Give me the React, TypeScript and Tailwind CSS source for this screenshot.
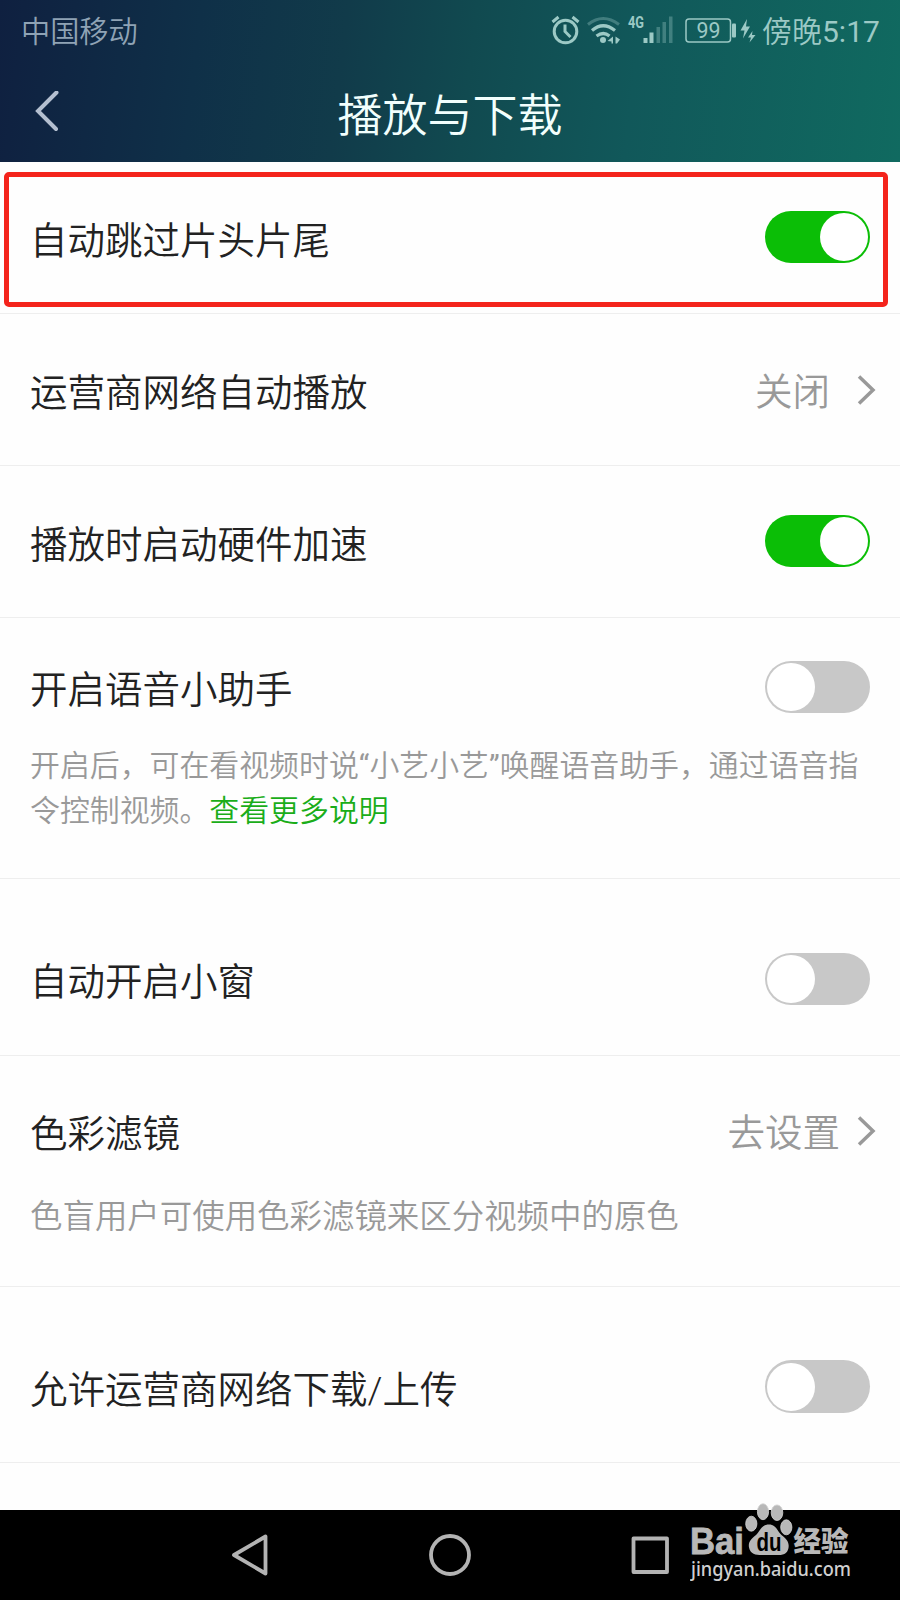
import type { ReactNode } from "react";

function Toggle({ on = false }: { on?: boolean }) {
  return (
    <div
      className={
        on
          ? "mb-px flex h-[52.500px] w-[105px] items-center justify-end rounded-full bg-[#0bbe06] pr-[2px]"
          : "flex h-[52.500px] w-[105px] items-center justify-start rounded-full bg-[#c8c8c8] pl-[2px]"
      }
    >
      <div className="size-[48px] rounded-full bg-white" />
    </div>
  );
}

function Chevron() {
  return (
    <svg className="h-[32px] w-[20px]" viewBox="0 0 20 32" fill="none" stroke="#999" strokeWidth="3.500">
      <path d="M3 2.500L17 16L3 29.500" />
    </svg>
  );
}

function Row({ className, label, children }: { className: string; label: string; children: ReactNode }) {
  return (
    <div className={"flex items-center justify-between pl-[30px] " + className}>
      <span className="pt-[6px] text-[37.5px] leading-[54px] text-[#222]">{label}</span>
      {children}
    </div>
  );
}

function StatusIcons() {
  return (
    <svg className="h-[62px] w-[212px] shrink-0" viewBox="0 0 212 62" fill="none" stroke="#9cc9c5">
      <circle cx="15.500" cy="31.500" r="11.300" strokeWidth="3" />
      <path d="M15 24.500v7l5.500 5.500M2.500 22l6-5M28.500 22l-6-5" strokeWidth="3" />
      <path d="M38 24.500q15-12 31 0" strokeWidth="3" opacity=".35" />
      <path d="M42 30.500q11-9.500 23 0M46.500 36q7-5 13 0" strokeWidth="3.200" />
      <circle cx="53" cy="40" r="3" fill="#9cc9c5" stroke="none" />
      <path d="M63 36.500v7h-1.500v-2l-4-.5zM65.500 36.500v7h1.500l3-4z" fill="#9cc9c5" stroke="none" />
      <text x="78" y="28" className="font-['Roboto'] text-[16px] font-bold" textLength="16" lengthAdjust="spacingAndGlyphs" fill="#9cc9c5" stroke="none">4G</text>
      <g fill="#9cc9c5" stroke="none">
        <rect x="93.500" y="38" width="4" height="5" />
        <rect x="99.500" y="32.500" width="4" height="10.500" />
        <rect x="106.500" y="27" width="3.500" height="16" opacity=".35" />
        <rect x="112.500" y="22" width="3.500" height="21" opacity=".35" />
        <rect x="119" y="16.500" width="3.500" height="26.500" opacity=".35" />
        <rect x="182" y="23.500" width="4" height="14" rx="1" />
        <path d="M197 19l-6.500 11.500h4l-1.500 8 7-12h-4zM202.500 31l-4.500 6.500h3l-1.500 5 6-7.500h-3.500z" />
      </g>
      <rect x="136" y="19" width="44.500" height="23" rx="3" strokeWidth="1.500" />
      <text x="146.500" y="38" className="font-['Roboto'] text-[22px] font-normal" textLength="24" lengthAdjust="spacingAndGlyphs" fill="#9cc9c5" stroke="none">99</text>
    </svg>
  );
}

function BaiduMark() {
  return (
    <div className="absolute left-[690px] top-[1502px] h-[80px] w-[165px]">
      <svg className="h-full w-full" viewBox="0 0 165 80" fill="#b8b8b8">
        <text x="0" y="51.500" className="font-['Liberation_Sans'] text-[37px] font-bold" textLength="54" lengthAdjust="spacingAndGlyphs" stroke="#b8b8b8" strokeWidth="0.800">Bai</text>
        <g stroke="#d4d4d4" strokeWidth="0.800">
          <ellipse cx="61.300" cy="21.700" rx="5.600" ry="7.500" />
          <ellipse cx="73" cy="9.700" rx="5.600" ry="8" />
          <ellipse cx="87" cy="10.700" rx="5.800" ry="7.800" />
          <ellipse cx="96.300" cy="25.300" rx="5.600" ry="7.500" />
        </g>
        <path d="M79 22.500c-8 0-9 7-13 10.500-5 4-8 7-7 12.500 2 9 10 7.500 20 7.500s18 1.500 19.500-7c1-6-2-9-7-13-4-3.500-5-10.500-12.500-10.500z" />
        <text x="66.500" y="48.500" className="font-['Liberation_Sans'] text-[26px] font-bold" textLength="25" lengthAdjust="spacingAndGlyphs" fill="#000">du</text>
        <text x="103.500" y="49.500" className="font-['Noto_Sans_CJK_SC'] text-[28px] font-black" textLength="55" lengthAdjust="spacingAndGlyphs">经验</text>
        <text x="1" y="73.500" className="font-['Noto_Sans'] text-[20px] font-medium" textLength="160" lengthAdjust="spacingAndGlyphs" fill="#d0d0d0">jingyan.baidu.com</text>
      </svg>
    </div>
  );
}

export default function App() {
  return (
    <div className="relative flex h-[1600px] w-[900px] flex-col overflow-hidden bg-[#fefefe] font-['Roboto','Noto_Sans_CJK_SC',sans-serif] font-[350]">
      <header className="h-[162px] bg-[linear-gradient(97deg,#0f2040_0%,#0f3048_22%,#113b4a_38%,#114a50_52%,#11585a_70%,#106a60_100%)]">
        <div className="flex h-[62px] items-center justify-between pl-[21px] text-[29.200px] text-[#8fa3b5]">
          <span className="pt-[4px]">中国移动</span>
          <div className="flex w-[350px] items-center text-[#9cc9c5]">
            <StatusIcons />
            <span className="whitespace-nowrap pt-px text-[30px]">傍晚<span className="font-normal">5:17</span></span>
          </div>
        </div>
        <div className="flex h-[100px] items-center">
          <div className="flex w-[100px] pl-[35px]">
            <svg className="h-[42px] w-[25px]" viewBox="0 0 25 42" fill="none" stroke="#b4bfd0" strokeWidth="4" strokeLinecap="round">
              <path d="M21.500 1.500L3 20L21 38" />
            </svg>
          </div>
          <h1 className="w-[700px] pt-[10px] text-center text-[45px] font-[350] text-[#f2fffd]">播放与下载</h1>
        </div>
      </header>
      <main className="flex h-[1348px] flex-col">
        <Row className="h-[152px] border-b border-[#eee] pr-[30px]" label="自动跳过片头片尾"><Toggle on /></Row>
        <Row className="h-[152px] border-b border-[#eee] pr-[24px]" label="运营商网络自动播放">
          <div className="flex items-center gap-[26px] text-[37.500px] text-[#999]"><span className="pt-[5px]">关闭</span><Chevron /></div>
        </Row>
        <Row className="h-[152px] border-b border-[#eee] pr-[30px]" label="播放时启动硬件加速"><Toggle on /></Row>
        <section className="h-[261px] border-b border-[#eee] pt-[42px]">
          <Row className="h-[54px] pr-[30px]" label="开启语音小助手"><Toggle /></Row>
          <p className="whitespace-nowrap pl-[30px] pt-[29px] text-[29.900px] leading-[45px] text-[#999]">
            开启后，可在看视频时说<span className="font-normal">“</span>小艺小艺<span className="font-normal">”</span>唤醒语音助手，通过语音指<br />
            令控制视频。<span className="text-[#1aad19]">查看更多说明</span>
          </p>
        </section>
        <Row className="h-[177px] border-b border-[#eee] pr-[30px] pt-[24px]" label="自动开启小窗"><Toggle /></Row>
        <section className="h-[231px] border-b border-[#eee] pt-[48px]">
          <Row className="h-[54px] pr-[24px]" label="色彩滤镜">
            <div className="flex items-center gap-[16px] text-[37.500px] text-[#999]"><span className="pt-[5px]">去设置</span><Chevron /></div>
          </Row>
          <p className="whitespace-nowrap pl-[30px] pt-[35px] text-[32.450px] leading-[48px] text-[#999]">色盲用户可使用色彩滤镜来区分视频中的原色</p>
        </section>
        <Row className="h-[176px] border-b border-[#eee] pr-[30px] pt-[24px]" label="允许运营商网络下载/上传"><Toggle /></Row>
      </main>
      <nav className="h-[90px] bg-black">
        <svg className="h-[90px] w-[900px]" viewBox="0 0 900 90" fill="none" stroke="#b3b3b3" strokeWidth="3.800" strokeLinejoin="round">
          <path d="M234 45L265.500 26.500V63.500Z" />
          <circle cx="450" cy="45" r="19" />
          <rect x="633.500" y="28.500" width="33.500" height="33.500" />
        </svg>
      </nav>
      <div className="absolute left-[4px] top-[172px] h-[135px] w-[884px] rounded-[5px] border-[5px] border-[#f4241c]" />
      <BaiduMark />
    </div>
  );
}
